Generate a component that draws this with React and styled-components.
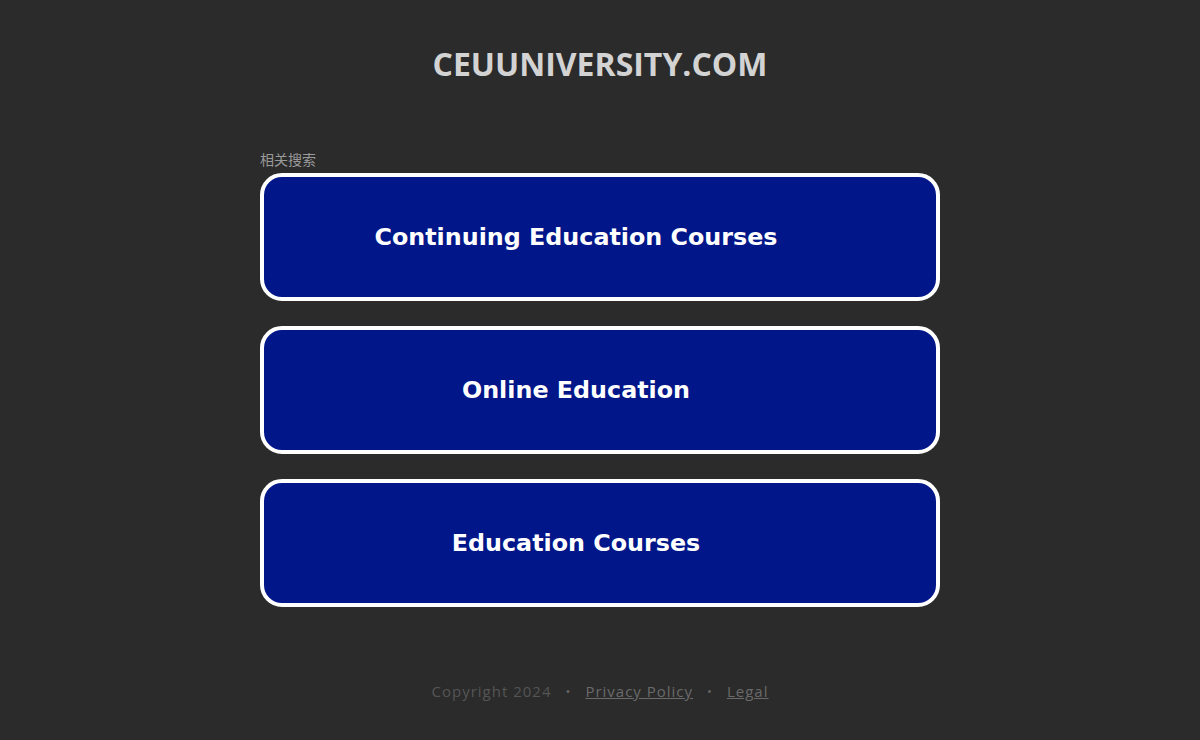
import React from "react"
import styled, { createGlobalStyle } from "styled-components"

const GlobalStyle = createGlobalStyle`
  html, body {
    margin: 0;
    padding: 0;
    background: #2b2b2b;
  }
`

const Page = styled.div`
  min-height: 740px;
  display: flex;
  flex-direction: column;
  align-items: center;
  font-family: "Open Sans", "Liberation Sans", sans-serif;
`

const Domain = styled.h1`
  margin: 43px 0 0;
  font-family: "Open Sans", "Liberation Sans", sans-serif;
  font-size: 32px;
  font-weight: 700;
  line-height: 42px;
  color: #d3d3d3;
  letter-spacing: 0;
`

const Results = styled.section`
  width: 680px;
  margin-top: 65px;
  display: flex;
  flex-direction: column;
`

const Label = styled.div`
  font-family: "Noto Sans CJK SC", sans-serif;
  font-size: 14px;
  line-height: 19px;
  color: #9a9a9a;
  margin-bottom: 4px;
`

const List = styled.div`
  display: flex;
  flex-direction: column;
  gap: 25px;
`

const LinkBox = styled.a`
  box-sizing: border-box;
  height: 128px;
  display: flex;
  align-items: center;
  justify-content: center;
  padding-right: 48px;
  background: #001689;
  border: 4px solid #ffffff;
  border-radius: 22px;
  color: #ffffff;
  text-decoration: none;
  font-family: "DejaVu Sans", Verdana, sans-serif;
  font-weight: 700;
  font-size: 23.8px;
`

const Footer = styled.footer`
  margin-top: 74px;
  display: flex;
  align-items: center;
  gap: 14px;
  font-family: "Open Sans", "Liberation Sans", sans-serif;
  font-size: 15px;
  letter-spacing: 1px;
  color: #555555;
`

const FootLink = styled.a`
  color: #6a6a6a;
  text-decoration: underline;
`

const Dot = styled.span`
  color: #666;
  font-size: 13px;
`

const links = ["Continuing Education Courses", "Online Education", "Education Courses"]

export default function App() {
  return (
    <>
      <GlobalStyle />
      <Page>
        <Domain>CEUUNIVERSITY.COM</Domain>
        <Results>
          <Label>相关搜索</Label>
          <List>
            {links.map((l) => (
              <LinkBox key={l} href="#">
                {l}
              </LinkBox>
            ))}
          </List>
        </Results>
        <Footer>
          <span>Copyright 2024</span>
          <Dot>•</Dot>
          <FootLink href="#">Privacy Policy</FootLink>
          <Dot>•</Dot>
          <FootLink href="#">Legal</FootLink>
        </Footer>
      </Page>
    </>
  )
}
